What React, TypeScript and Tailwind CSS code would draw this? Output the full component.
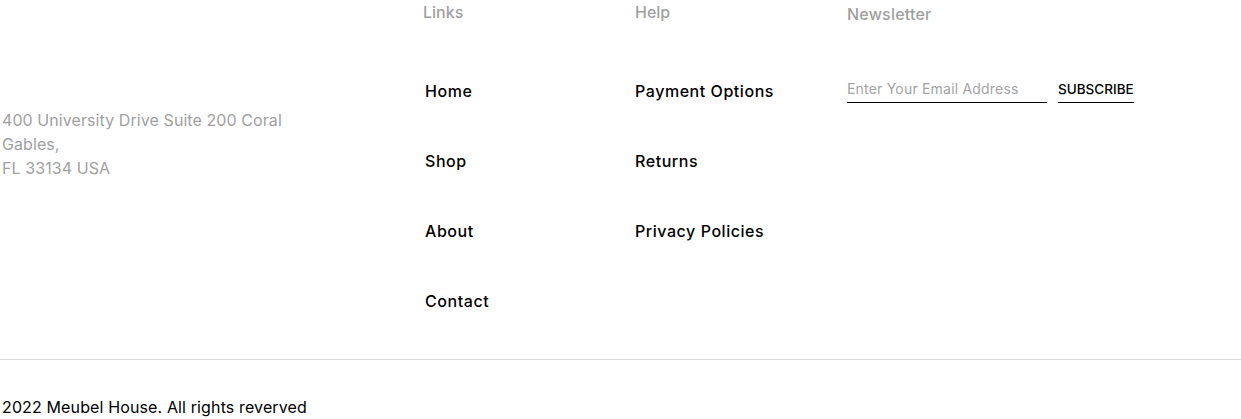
export default function App() {
  const font = { fontFamily: 'Inter, "Open Sans", "Liberation Sans", sans-serif' };
  const item = "text-[16px] leading-[24px] font-medium text-black tracking-[0.55px]";
  return (
    <div className="w-[1241px] h-[419px] overflow-hidden bg-white" style={font}>
      <div className="flex h-[359px]">
        <div className="w-[423px] pl-[2px] pt-[108px]">
          <p className="text-[16px] leading-[24px] text-[#9F9F9F] w-[300px] tracking-[0.08px]">
            400 University Drive Suite 200 Coral Gables,
            <br />
            FL 33134 USA
          </p>
        </div>
        <div className="w-[212px]">
          <div className="text-[16px] leading-[24px] font-medium text-[#9F9F9F]">Links</div>
          <ul className="mt-[55px] flex flex-col gap-[46px] pl-[2px]">
            <li className={item}>Home</li>
            <li className={item}>Shop</li>
            <li className={item}>About</li>
            <li className={item}>Contact</li>
          </ul>
        </div>
        <div className="w-[212px]">
          <div className="text-[16px] leading-[24px] font-medium text-[#9F9F9F]">Help</div>
          <ul className="mt-[55px] flex flex-col gap-[46px]">
            <li className={item}>Payment Options</li>
            <li className={item}>Returns</li>
            <li className={item}>Privacy Policies</li>
          </ul>
        </div>
        <div className="flex-1 pt-[2px]">
          <div className="text-[16px] leading-[24px] font-medium text-[#9F9F9F] tracking-[0.2px]">Newsletter</div>
          <div className="mt-[50px] flex items-end gap-[11px]">
            <div className="w-[200px] border-b border-black pb-[2px]">
              <input
                className="w-full text-[14px] leading-[21px] outline-none placeholder-[#A3A3A3] bg-transparent tracking-[0.2px]"
                style={font}
                placeholder="Enter Your Email Address"
              />
            </div>
            <button className="border-b border-black pb-[2px] text-[13.5px] leading-[21px] font-medium text-black">
              SUBSCRIBE
            </button>
          </div>
        </div>
      </div>
      <div className="border-t border-[#D9D9D9] pt-[35px] pl-[2px]">
        <p className="text-[16px] leading-[24px] text-black tracking-[0.13px]">2022 Meubel House. All rights reverved</p>
      </div>
    </div>
  );
}
